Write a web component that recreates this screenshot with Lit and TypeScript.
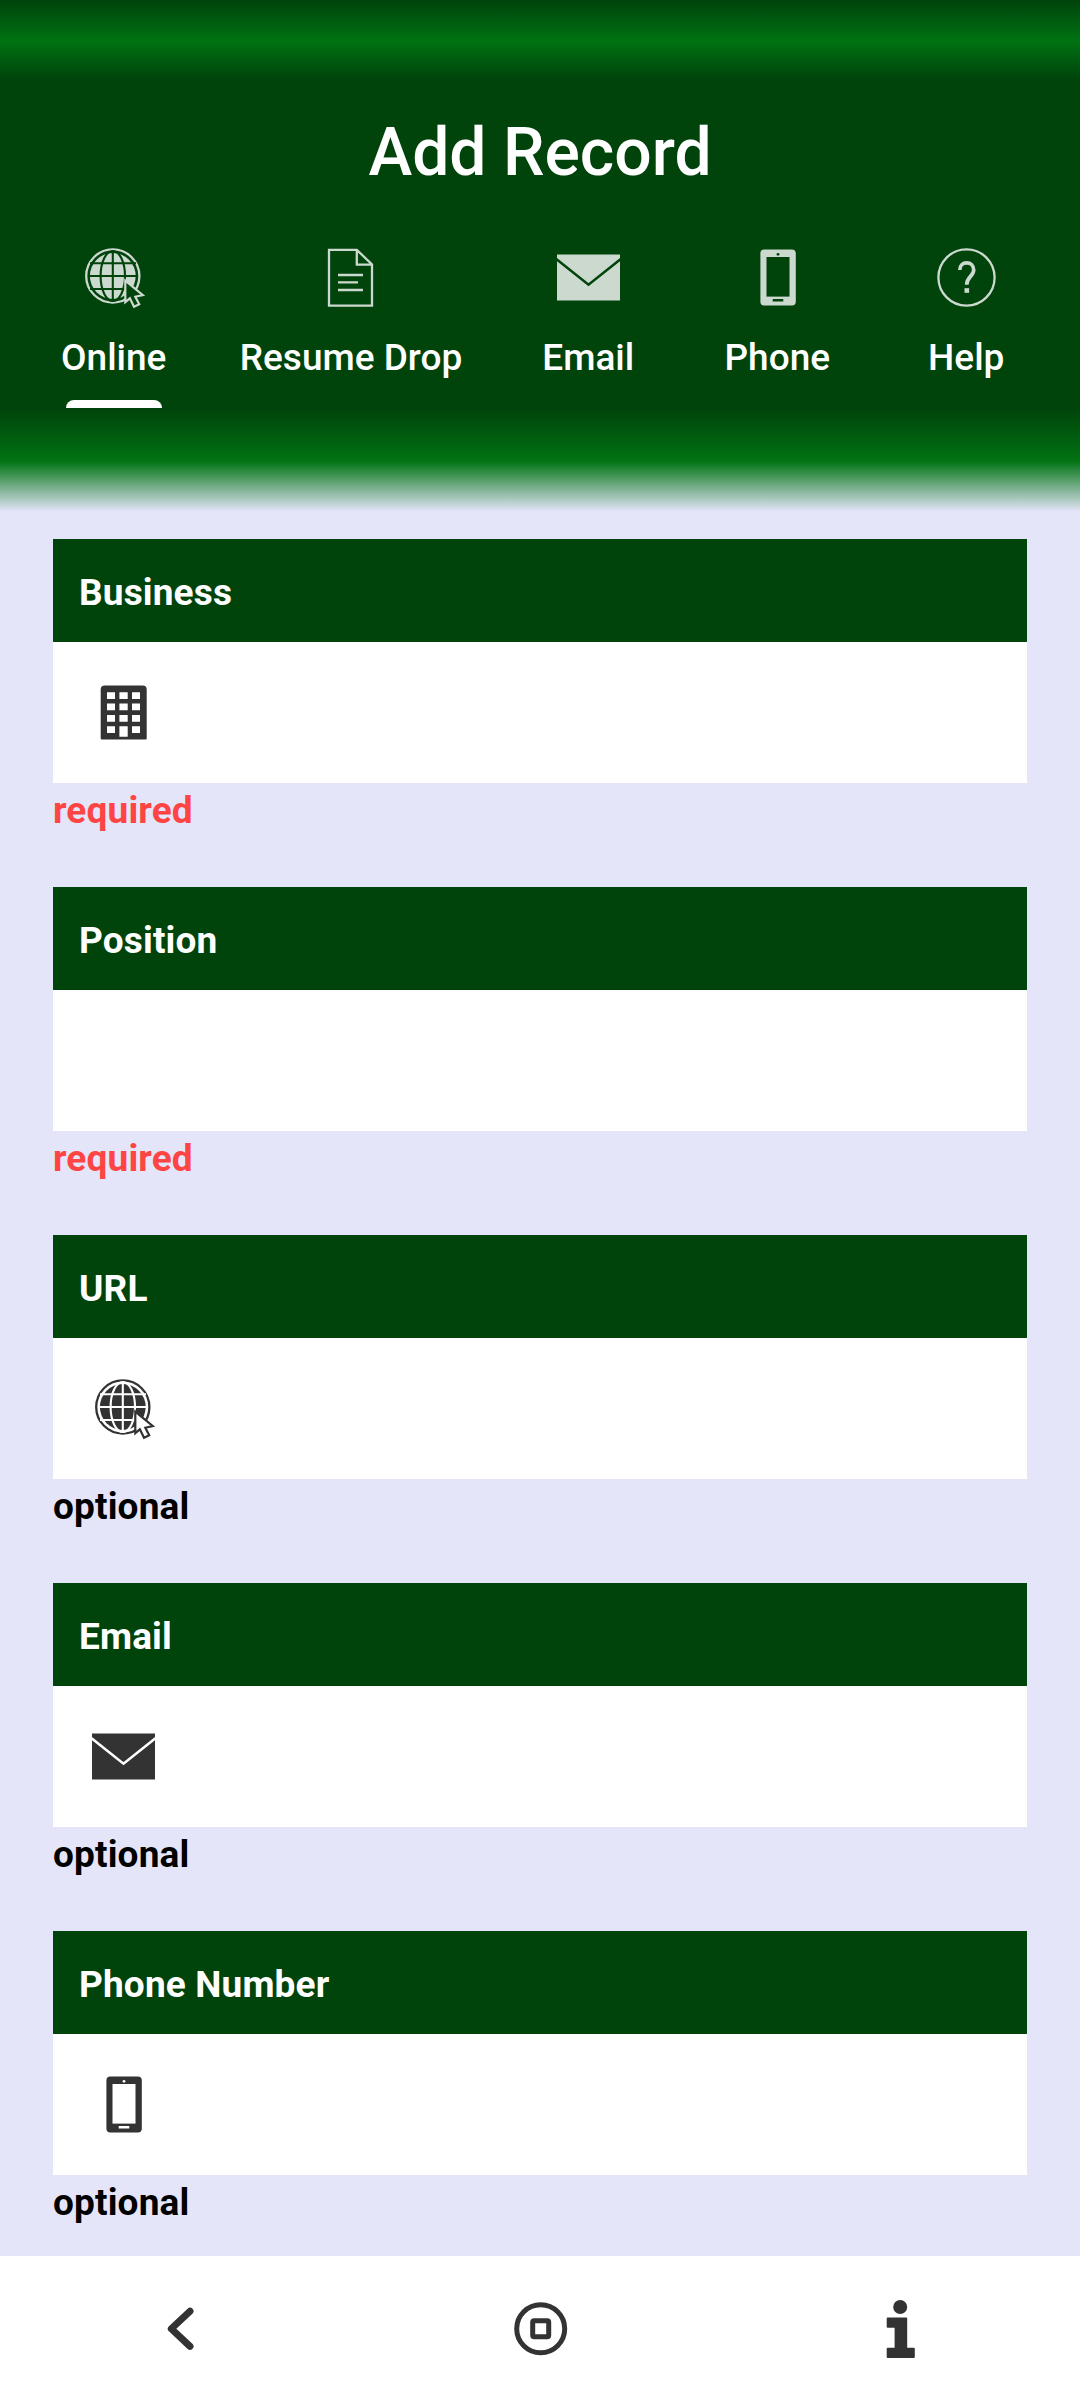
import { LitElement, html, css, svg } from "lit";
import { customElement, property } from "lit/decorators.js";
import { classMap } from "lit/directives/class-map.js";

const glyphs: Record<string, unknown> = {
  globe: svg`
    <circle class="line" cx="30.8" cy="30" r="26.6" />
    <circle class="solid" cx="30.8" cy="30" r="22.9" />
    <path class="gap" d="M30.8 6v48M6 30h50M8 17.3h46M8 43h46" />
    <ellipse class="gap" cx="30.8" cy="30" rx="12.2" ry="25" />
    <path class="cursor" d="M43.3 34.6v21.6l4.6-3.9 4.1 8.4 5.2-2.4-3.9-7.6 7.6-1.6z" />`,
  document: svg`
    <path class="line" d="M9 3.8h27.8L52 18.5v41.2H9zM36.8 3.8v14.9H52" />
    <path class="line" d="M18 29h25M18 36.4h20M18 44h25" />`,
  envelope: svg`
    <path class="solid" d="M0 8.5h63v46H0z" />
    <path class="gap wide" d="M-2 12l33.5 26.7L65 12" />`,
  phone: svg`
    <rect class="solid" x="14.4" y="3.6" width="35.4" height="56" rx="4" />
    <rect class="hole" x="20.5" y="11" width="23" height="39.6" />
    <rect class="hole" x="26.7" y="53" width="10.6" height="2.6" rx="0.6" />
    <circle class="hole" cx="32" cy="8.3" r="1.4" />`,
  help: svg`
    <circle class="line" cx="31.5" cy="31.5" r="28.1" />
    <path class="line thick" d="M24.8 24c0-4.4 2.9-7.1 6.9-7.1s7 2.7 7 7.1c0 6.3-7 6.700-7 14.700" />
    <rect class="solid" x="29.500" y="42.200" width="4.600" height="4.600" />`,
  building: svg`
    <path class="solid" d="M12.700 4.400h38a4 4 0 0 1 4 4v49a1 1 0 0 1-1 1h-44a1 1 0 0 1-1-1v-49a4 4 0 0 1 4-4z" />
    <path class="hole" d="M15 11.300h8v6.800h-8zM27.400 11.300h8.300v6.800h-8.300zM40 11.300h8v6.800h-8zM15 22.500h8v6.800h-8zM27.400 22.500h8.300v6.800h-8.300zM40 22.500h8v6.800h-8zM15 34h8v6.700h-8zM27.400 34h8.300v6.700h-8.300zM40 34h8v6.700h-8zM15 45.200h8v6.700h-8zM40 45.200h8v6.700h-8zM27.400 45.200h8.300v10.500h-8.300z" />`,
  back: svg`<path class="chevron" d="M41 14.200L22.300 31.800 41 49.400" />`,
  home: svg`
    <circle class="ring" cx="31.700" cy="31.800" r="24" />
    <rect class="ring" x="23.700" y="23.800" width="16" height="16" rx="1.500" />`,
  info: svg`
    <circle class="solid" cx="31.200" cy="10" r="7" />
    <path class="solid" d="M18.700 20.500h18.500a1 1 0 0 1 1 1v29.300h6.600a1 1 0 0 1 1 1v8.300a1 1 0 0 1-1 1H18.700a1 1 0 0 1-1-1v-8.300a1 1 0 0 1 1-1h6.900V30.800h-6.900a1 1 0 0 1-1-1v-8.300a1 1 0 0 1 1-1z" />`,
};

@customElement("app-icon")
class AppIcon extends LitElement {
  @property() name = "";

  static styles = css`
    :host {
      display: block;
      width: 63px;
      height: 63px;
      flex: none;
    }
    svg {
      display: block;
    }
    .solid {
      fill: var(--ink);
    }
    .hole {
      fill: var(--paper);
    }
    .line {
      fill: none;
      stroke: var(--ink);
      stroke-width: 2.3;
    }
    .thick {
      stroke-width: 3.7;
    }
    .gap {
      fill: none;
      stroke: var(--paper);
      stroke-width: 2.1;
    }
    .wide {
      stroke-width: 2.6;
    }
    .cursor {
      fill: var(--paper);
      stroke: var(--ink);
      stroke-width: 2.2;
    }
    .chevron {
      fill: none;
      stroke: var(--ink);
      stroke-width: 7;
      stroke-linecap: round;
      stroke-linejoin: round;
    }
    .ring {
      fill: none;
      stroke: var(--ink);
      stroke-width: 5;
    }
  `;

  render() {
    return html`<svg width="63" height="63" viewBox="0 0 63 63">${glyphs[this.name]}</svg>`;
  }
}

@customElement("record-field")
class RecordField extends LitElement {
  @property() label = "";
  @property() icon = "";
  @property({ type: Boolean }) required = false;

  static styles = css`
    :host {
      display: block;
      height: 348px;
      letter-spacing: 0.15px;
      --ink: #333333;
      --paper: #ffffff;
    }
    .title {
      display: flex;
      align-items: center;
      box-sizing: border-box;
      height: 103px;
      padding: 5px 26px 0;
      background: #00430b;
      color: #ffffff;
      font-weight: 700;
    }
    .box {
      display: flex;
      align-items: center;
      height: 141px;
      padding: 0 39px;
      background: #ffffff;
    }
    .hint {
      margin-top: 6px;
      font-weight: 700;
      color: #000000;
    }
    .missing {
      color: #ff4444;
    }
  `;

  render() {
    return html`
      <div class="title">${this.label}</div>
      <div class="box">${this.icon ? html`<app-icon name=${this.icon}></app-icon>` : ""}</div>
      <div class=${classMap({ hint: true, missing: this.required })}>
        ${this.required ? "required" : "optional"}
      </div>
    `;
  }
}

const tabs = [
  { label: "Online", icon: "globe" },
  { label: "Resume Drop", icon: "document" },
  { label: "Email", icon: "envelope" },
  { label: "Phone", icon: "phone" },
  { label: "Help", icon: "help" },
];

const fields = [
  { label: "Business", icon: "building", required: true },
  { label: "Position", icon: "", required: true },
  { label: "URL", icon: "globe", required: false },
  { label: "Email", icon: "envelope", required: false },
  { label: "Phone Number", icon: "phone", required: false },
];

@customElement("app-root")
class AppRoot extends LitElement {
  static styles = css`
    :host {
      display: flex;
      flex-direction: column;
      width: 1080px;
      height: 2400px;
      overflow: hidden;
      background: #e5e5fa;
      font-family: Roboto, "Liberation Sans", sans-serif;
      font-size: 37px;
      line-height: 44px;
    }
    .header {
      box-sizing: border-box;
      flex: none;
      height: 512px;
      padding-top: 113px;
      color: #ffffff;
      background: linear-gradient(
        #00430b 0,
        #007312 41px,
        #00430b 80px,
        #00430b 408px,
        #007312 461px,
        #e5e5fa 512px
      );
    }
    .heading {
      margin: 0;
      font-size: 66px;
      line-height: 80px;
      font-weight: 500;
      text-align: center;
    }
    .tabs {
      display: flex;
      justify-content: center;
      height: 215px;
      --ink: #ccd9ce;
      --paper: #00430b;
    }
    .tab {
      display: flex;
      flex-direction: column;
      align-items: center;
      box-sizing: border-box;
      min-width: 189px;
      padding: 53px 31.5px 0;
      font-weight: 500;
      white-space: nowrap;
    }
    .name {
      margin-top: 27px;
    }
    .marker {
      width: 96px;
      height: 8px;
      margin-top: auto;
      border-radius: 8px 8px 0 0;
      background: #ffffff;
    }
    .form {
      flex: 1;
      min-height: 0;
      overflow: hidden;
      padding: 27px 53px 0;
    }
    .nav {
      display: grid;
      grid-template-columns: repeat(3, 1fr);
      place-items: center;
      flex: none;
      height: 144px;
      background: #ffffff;
      --ink: #333333;
      --paper: #ffffff;
    }
  `;

  render() {
    return html`
      <header class="header">
        <h1 class="heading">Add Record</h1>
        <div class="tabs">
          ${tabs.map(
            (tab, i) => html`
              <div class="tab">
                <app-icon name=${tab.icon}></app-icon>
                <span class="name">${tab.label}</span>
                ${i === 0 ? html`<span class="marker"></span>` : ""}
              </div>
            `
          )}
        </div>
      </header>
      <main class="form">
        ${fields.map(
          (f) => html`<record-field label=${f.label} icon=${f.icon} ?required=${f.required}></record-field>`
        )}
      </main>
      <nav class="nav">
        <app-icon name="back"></app-icon>
        <app-icon name="home"></app-icon>
        <app-icon name="info"></app-icon>
      </nav>
    `;
  }
}
